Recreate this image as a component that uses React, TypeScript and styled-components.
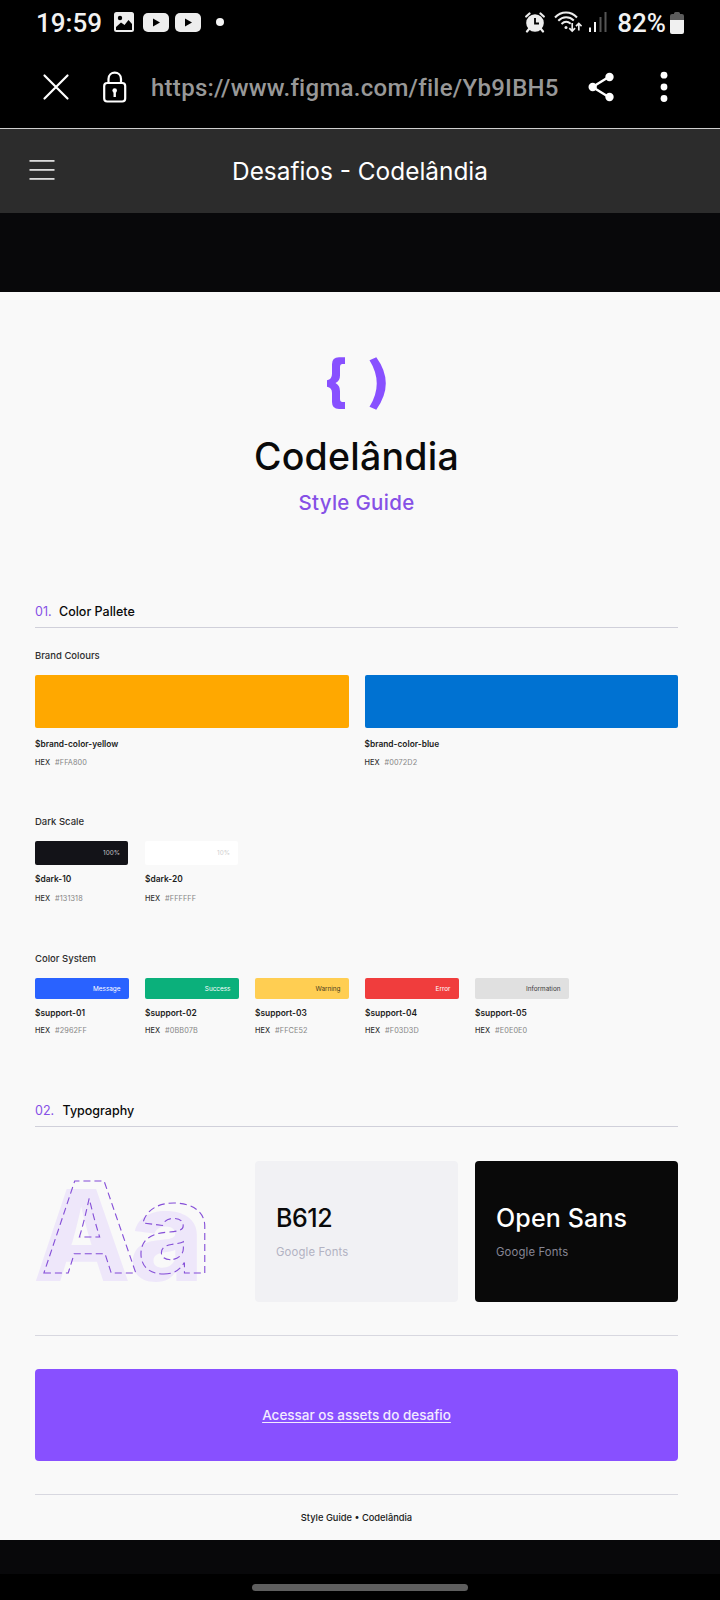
import React from "react";
import styled, { createGlobalStyle } from "styled-components";

const GlobalStyle = createGlobalStyle`
  * { box-sizing: border-box; }
  body { margin: 0; background: #000; font-family: Inter, "Liberation Sans", sans-serif; }
`;

const Screen = styled.div`
  width: 720px;
  height: 1600px;
  display: flex;
  flex-direction: column;
  background: #08080a;
  overflow: hidden;
`;

const StatusBar = styled.div`
  height: 46px;
  background: #000;
  display: flex;
  justify-content: space-between;
  align-items: center;
  padding: 0 36px 0 36px;
  font: 500 26px/46px Roboto, sans-serif;
  color: #f2f2f2;
`;

const StatusGroup = styled.div`
  display: flex;
  align-items: center;
`;

const StatusText = styled.span<{ $left?: number }>`
  margin-left: ${(p) => p.$left ?? 0}px;
  white-space: nowrap;
`;

const Icon = styled.svg<{ $left?: number; $top?: number }>`
  display: block;
  flex: none;
  margin-left: ${(p) => p.$left ?? 0}px;
  margin-top: ${(p) => p.$top ?? 0}px;
`;

const AddressBar = styled.div`
  height: 83px;
  background: #000;
  border-bottom: 1px solid #cfcfcf;
  display: flex;
  align-items: center;
  padding: 0 40px 1px 42px;
`;

const Url = styled.span`
  margin-left: 23px;
  width: 409px;
  padding-top: 2px;
  white-space: nowrap;
  font: 500 24px/30px Roboto, sans-serif;
  letter-spacing: 0.27px;
  color: #989898;
`;

const FileBar = styled.header`
  height: 84px;
  background: #2c2c2c;
  display: grid;
  grid-template-columns: 60px 1fr 60px;
  align-items: center;
`;

const FileTitle = styled.h1`
  margin: 0;
  text-align: center;
  font: 400 24.4px/30px Inter, sans-serif;
  color: #fff;
`;

const Paper = styled.main`
  margin-top: 79px;
  height: 1248px;
  padding: 64px 42px 0 35px;
  background: #f9f9f9;
  display: flex;
  flex-direction: column;
`;

const Hero = styled.div`
  display: flex;
  flex-direction: column;
  align-items: center;
  margin-bottom: 85px;
`;

const Brand = styled.h2`
  margin: 22px 0 0;
  font-size: 37.5px;
  font-weight: 500;
  line-height: 48px;
  letter-spacing: 0.25px;
  color: #0a0a0a;
`;

const Tagline = styled.p`
  margin: 8px 0 0;
  font-size: 20.5px;
  font-weight: 500;
  line-height: 28px;
  letter-spacing: 0.3px;
  color: #8650e6;
`;

const SectionHeading = styled.h3<{ $numWidth: number }>`
  margin: 0;
  height: 26px;
  border-bottom: 1px solid #d0d0da;
  display: grid;
  grid-template-columns: ${(p) => p.$numWidth}px 1fr;
  font-size: 12.5px;
  font-weight: 500;
  line-height: 20px;
  color: #0a0a0a;
`;

const Num = styled.span`
  color: #8650e6;
  font-weight: 400;
`;

const Group = styled.section<{ $top: number }>`
  margin-top: ${(p) => p.$top}px;
`;

const GroupTitle = styled.h4`
  margin: 0 0 12px;
  font-size: 9.5px;
  font-weight: 500;
  line-height: 14px;
  color: #2e2e2e;
`;

const Swatches = styled.div<{ $column: string; $gap: number }>`
  display: grid;
  grid-auto-flow: column;
  grid-auto-columns: ${(p) => p.$column};
  gap: ${(p) => p.$gap}px;
`;

const Chip = styled.div<{ $color: string; $ink?: string; $height: number }>`
  height: ${(p) => p.$height}px;
  border-radius: 2px;
  background: ${(p) => p.$color};
  color: ${(p) => p.$ink ?? "#fff"};
  display: flex;
  align-items: center;
  justify-content: flex-end;
  padding: 0 8px;
  font-size: 6.4px;
`;

const Token = styled.div<{ $top: number }>`
  margin-top: ${(p) => p.$top}px;
  font-size: 8.4px;
  font-weight: 600;
  line-height: 12px;
  color: #1c1c1c;
`;

const Hex = styled.div<{ $top: number }>`
  margin-top: ${(p) => p.$top}px;
  display: grid;
  grid-template-columns: 20px 1fr;
  font-size: 7.3px;
  font-weight: 500;
  line-height: 10px;
  letter-spacing: 0.1px;
  color: #303030;
`;

const HexValue = styled.span`
  color: #858585;
  font-weight: 400;
`;

const TypeRow = styled.div`
  margin-top: 34px;
  height: 141px;
  display: grid;
  grid-template-columns: 203px 203px 203px;
  gap: 17px;
`;

const Specimen = styled.svg`
  display: block;
  overflow: visible;
`;

const FontCard = styled.div<{ $dark?: boolean }>`
  border-radius: 4px;
  background: ${(p) => (p.$dark ? "#090909" : "#f1f1f4")};
  color: ${(p) => (p.$dark ? "#fff" : "#0a0a0a")};
  padding: 41px 21px 0;
`;

const FontName = styled.div<{ $spacing: number }>`
  font-size: 25px;
  font-weight: 500;
  line-height: 32px;
  letter-spacing: ${(p) => p.$spacing}px;
`;

const FontSource = styled.div<{ $dark?: boolean }>`
  margin-top: 10px;
  font-size: 11.3px;
  line-height: 16px;
  letter-spacing: 0.15px;
  color: ${(p) => (p.$dark ? "#868694" : "#b2b2c2")};
`;

const Rule = styled.hr`
  width: 100%;
  margin: 33px 0;
  border: 0;
  height: 1px;
  flex: none;
  background: #d8d8e0;
`;

const AssetsButton = styled.div`
  height: 92px;
  border-radius: 4px;
  background: #8850ff;
  display: flex;
  align-items: center;
  justify-content: center;
`;

const AssetsLink = styled.a`
  color: #f3ebff;
  font-size: 13.5px;
  font-weight: 500;
  line-height: 20px;
  text-decoration: underline;
  text-underline-offset: 2px;
`;

const Footer = styled.footer`
  margin-top: -17px;
  text-align: center;
  font-size: 9.3px;
  font-weight: 500;
  line-height: 14px;
  color: #1a1a1a;
`;

const NavArea = styled.div`
  margin-top: 34px;
  height: 26px;
  background: #000;
  display: flex;
  justify-content: center;
  padding-top: 10px;
`;

const NavPill = styled.div`
  width: 216px;
  height: 7px;
  border-radius: 4px;
  background: #5e5e5e;
`;

type Swatch = { token: string; hex: string; label?: string; ink?: string };

const brand: Swatch[] = [
  { token: "$brand-color-yellow", hex: "#FFA800" },
  { token: "$brand-color-blue", hex: "#0072D2" },
];

const darkScale: Swatch[] = [
  { token: "$dark-10", hex: "#131318", label: "100%", ink: "#c4c4c8" },
  { token: "$dark-20", hex: "#FFFFFF", label: "10%", ink: "#cfcfcf" },
];

const system: Swatch[] = [
  { token: "$support-01", hex: "#2962FF", label: "Message" },
  { token: "$support-02", hex: "#0BB07B", label: "Success" },
  { token: "$support-03", hex: "#FFCE52", label: "Warning", ink: "#4c4020" },
  { token: "$support-04", hex: "#F03D3D", label: "Error" },
  { token: "$support-05", hex: "#E0E0E0", label: "Information", ink: "#3a3a3a" },
];

function SwatchList(props: {
  items: Swatch[];
  column: string;
  gap: number;
  height: number;
  tokenTop: number;
  hexTop: number;
}) {
  return (
    <Swatches $column={props.column} $gap={props.gap}>
      {props.items.map((s) => (
        <div key={s.token}>
          <Chip $color={s.hex} $ink={s.ink} $height={props.height}>
            {s.label}
          </Chip>
          <Token $top={props.tokenTop}>{s.token}</Token>
          <Hex $top={props.hexTop}>
            <span>HEX</span>
            <HexValue>{s.hex}</HexValue>
          </Hex>
        </div>
      ))}
    </Swatches>
  );
}

const VideoIcon = ({ left }: { left: number }) => (
  <Icon $left={left} $top={-1} width="26" height="19" viewBox="0 0 26 19">
    <rect width="26" height="19" rx="5" fill="#ededed" />
    <path d="M10 5.500v8l7-4z" fill="#000" />
  </Icon>
);

export default function App() {
  return (
    <Screen>
      <GlobalStyle />
      <StatusBar>
        <StatusGroup>
          <StatusText>19:59</StatusText>
          <Icon $left={12} $top={-2} width="20" height="20" viewBox="0 0 20 20">
            <rect width="20" height="20" rx="2.500" fill="#ededed" />
            <circle cx="6" cy="6" r="2.200" fill="#000" />
            <path d="M2 18v-3l5-4.500 3.500 2.500L14.500 8 18 12v6z" fill="#000" />
          </Icon>
          <VideoIcon left={9} />
          <VideoIcon left={6} />
          <Icon $left={15} $top={-2} width="8" height="8" viewBox="0 0 8 8">
            <circle cx="4" cy="4" r="4" fill="#f5f5f5" />
          </Icon>
        </StatusGroup>
        <StatusGroup>
          <Icon $top={-1} width="20" height="21" viewBox="0 0 20 21">
            <circle cx="10" cy="11" r="8.800" fill="#ededed" />
            <path d="M1.200 4.500 4.500 1.500M18.800 4.500 15.500 1.500M4 17l-2 2.500M16 17l2 2.500" stroke="#ededed" strokeWidth="2.200" strokeLinecap="round" />
            <path d="M10 6v5.500h4" fill="none" stroke="#000" strokeWidth="1.800" />
          </Icon>
          <Icon $left={9} $top={-2} width="28" height="22" viewBox="0 0 28 22" fill="none" stroke="#ededed" strokeWidth="2">
            <path d="M1 6.500C7-.200 17-.200 23 6.500" />
            <path d="M4.300 9.800c4.500-4.600 11-4.600 15.500-.300" />
            <path d="M7.500 13c2.800-2.600 6.300-2.700 9.200-.300" />
            <circle cx="12" cy="16.500" r="1.500" fill="#ededed" stroke="none" />
            <path d="M18.200 12v8m-2.900-2.900 2.900 2.900 2.900-2.900M24.800 19.500v-7m-2.800 2.700 2.800-2.700 2.800 2.700" strokeWidth="1.700" />
          </Icon>
          <Icon $left={6} $top={-2} width="20" height="20" viewBox="0 0 20 20">
            <rect x="1" y="15.500" width="2" height="4.500" fill="#f5f5f5" />
            <rect x="6" y="10" width="2" height="10" fill="#f5f5f5" />
            <rect x="11.500" y="5" width="2" height="15" fill="#555" />
            <rect x="16.500" y="0" width="2" height="20" fill="#555" />
          </Icon>
          <StatusText $left={9}>82%</StatusText>
          <Icon $left={4} width="14" height="22" viewBox="0 0 14 22">
            <path d="M4 2V1.500Q4 0 5.500 0h3Q10 0 10 1.500V2h2q2 0 2 2v4H0V4q0-2 2-2z" fill="#5c5c5c" />
            <path d="M0 8h14v12q0 2-2 2H2q-2 0-2-2z" fill="#f0f0f0" />
          </Icon>
        </StatusGroup>
      </StatusBar>

      <AddressBar>
        <Icon width="28" height="28" viewBox="0 0 28 28" stroke="#fff" strokeWidth="2.200" strokeLinecap="round">
          <path d="M2.500 2.500l23 23M25.500 2.500l-23 23" />
        </Icon>
        <Icon $left={32} width="26" height="32" viewBox="0 0 26 32" fill="none" stroke="#fff" strokeWidth="2.200">
          <rect x="2.200" y="12" width="21" height="18.500" rx="3" />
          <path d="M6.500 12V8c0-8.500 12.500-8.500 12.500 0v4" />
          <circle cx="12.700" cy="19.500" r="2.300" fill="#fff" stroke="none" />
          <path d="M12.700 20v6" strokeWidth="2.400" />
        </Icon>
        <Url>https://www.figma.com/file/Yb9IBH5</Url>
        <Icon $left={28} width="26" height="30" viewBox="0 0 26 30">
          <path d="M21.500 4.500 4.500 15l17 10.500" fill="none" stroke="#fff" strokeWidth="2.400" />
          <circle cx="21.500" cy="5" r="4.200" fill="#fff" />
          <circle cx="4.700" cy="15" r="4.200" fill="#fff" />
          <circle cx="21.500" cy="25" r="4.200" fill="#fff" />
        </Icon>
        <Icon $left={46} width="8" height="32" viewBox="0 0 8 32" fill="#fff">
          <circle cx="4" cy="4.200" r="3.400" />
          <circle cx="4" cy="16" r="3.400" />
          <circle cx="4" cy="27.500" r="3.400" />
        </Icon>
      </AddressBar>

      <FileBar>
        <Icon $left={29} $top={-2} width="26" height="22" viewBox="0 0 26 22" fill="#dcdcdc">
          <rect x="0.500" y="1" width="25" height="1.800" />
          <rect x="0.500" y="10" width="25" height="1.800" />
          <rect x="0.500" y="19" width="25" height="1.800" />
        </Icon>
        <FileTitle>Desafios - Codelândia</FileTitle>
      </FileBar>

      <Paper>
        <Hero>
          <Icon width="62" height="55" viewBox="0 0 62 55" fill="#8850ff">
            <path d="M19 1.200h-6q-7 0-7 7v9.500q0 5.500-5 6.500v6.500q5 .800 5 6.300V46q0 7 7 7h6v-7h-2.500q-2.500 0-2.500-3v-8q0-5.500-4.500-8 4.500-2 4.500-7.500V11q0-3 2.500-3H19z" />
            <path d="M43.500 4.200 50.300 1.200q19 26 0 52.600L43.500 50.800q14.500-23.300 0-46.600z" />
          </Icon>
          <Brand>Codelândia</Brand>
          <Tagline>Style Guide</Tagline>
        </Hero>

        <SectionHeading $numWidth={24}>
          <Num>01.</Num>
          <span>Color Pallete</span>
        </SectionHeading>
        <Group $top={21}>
          <GroupTitle>Brand Colours</GroupTitle>
          <SwatchList items={brand} column="313.500px" gap={16} height={53} tokenTop={10} hexTop={8} />
        </Group>
        <Group $top={47}>
          <GroupTitle>Dark Scale</GroupTitle>
          <SwatchList items={darkScale} column="93px" gap={17} height={24} tokenTop={8} hexTop={9} />
        </Group>
        <Group $top={48}>
          <GroupTitle>Color System</GroupTitle>
          <SwatchList items={system} column="93.500px" gap={16.5} height={21} tokenTop={8} hexTop={7} />
        </Group>

        <Group $top={65}>
          <SectionHeading $numWidth={27.5}>
            <Num>02.</Num>
            <span>Typography</span>
          </SectionHeading>
          <TypeRow>
            <Specimen width="203" height="141" fontFamily="Inter, sans-serif" fontWeight="800" fontSize="127" letterSpacing="-1.500">
              <use href="#specimen-letters" x="-8" y="8" fill="#eee7fa" />
              <g fill="transparent" stroke="#8650d8" strokeWidth="1.100" strokeDasharray="7 4">
                <text x="6" y="111.500">Aa</text>
              </g>
              <defs>
                <text id="specimen-letters" x="6" y="111.500">Aa</text>
              </defs>
            </Specimen>
            <FontCard>
              <FontName $spacing={-0.4}>B612</FontName>
              <FontSource>Google Fonts</FontSource>
            </FontCard>
            <FontCard $dark>
              <FontName $spacing={0.15}>Open Sans</FontName>
              <FontSource $dark>Google Fonts</FontSource>
            </FontCard>
          </TypeRow>
        </Group>

        <Rule />
        <AssetsButton>
          <AssetsLink>Acessar os assets do desafio</AssetsLink>
        </AssetsButton>
        <Rule />
        <Footer>Style Guide • Codelândia</Footer>
      </Paper>

      <NavArea>
        <NavPill />
      </NavArea>
    </Screen>
  );
}
